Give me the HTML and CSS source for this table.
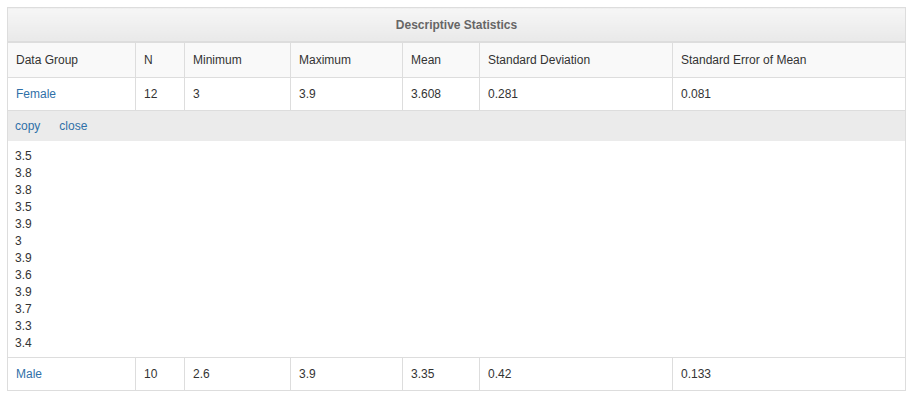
FILE: index.html
```html
<!DOCTYPE html>
<html>
<head>
<meta charset="utf-8">
<link rel="stylesheet" href="styles.css">
</head>
<body>
<table class="stats">
  <colgroup>
    <col class="c1"><col class="c2"><col class="c3"><col class="c4"><col class="c5"><col class="c6"><col class="c7">
  </colgroup>
  <thead>
    <tr class="title-row"><th colspan="7">Descriptive Statistics</th></tr>
  </thead>
  <tbody>
    <tr class="head-row">
      <td>Data Group</td><td>N</td><td>Minimum</td><td>Maximum</td><td>Mean</td><td>Standard Deviation</td><td>Standard Error of Mean</td>
    </tr>
    <tr class="data-row">
      <td><a class="link">Female</a></td><td>12</td><td>3</td><td>3.9</td><td>3.608</td><td>0.281</td><td>0.081</td>
    </tr>
    <tr class="detail-row">
      <td colspan="7">
        <div class="bar"><a class="link">copy</a><a class="link">close</a></div>
        <div class="values">
          <div>3.5</div><div>3.8</div><div>3.8</div><div>3.5</div><div>3.9</div><div>3</div>
          <div>3.9</div><div>3.6</div><div>3.9</div><div>3.7</div><div>3.3</div><div>3.4</div>
        </div>
      </td>
    </tr>
    <tr class="data-row">
      <td><a class="link">Male</a></td><td>10</td><td>2.6</td><td>3.9</td><td>3.35</td><td>0.42</td><td>0.133</td>
    </tr>
  </tbody>
</table>
</body>
</html>
```
FILE: styles.css
```css
body {
  margin: 7px;
  font-family: "Liberation Sans", Arial, sans-serif;
  font-size: 12px;
  color: #333;
  background: #fff;
}
.stats {
  border-collapse: collapse;
  table-layout: fixed;
  width: 898px;
  border: 1px solid #ddd;
}
.c1 { width: 128px; }
.c2 { width: 49px; }
.c3 { width: 106px; }
.c4 { width: 112px; }
.c5 { width: 77px; }
.c6 { width: 193px; }
.c7 { width: 233px; }
.title-row th {
  height: 33px;
  padding: 0;
  font-weight: bold;
  color: #666;
  text-align: center;
  background: linear-gradient(#f6f6f6, #e9e9e9);
  border-bottom: 2px solid #ddd;
}
.head-row td, .data-row td {
  border: 1px solid #ddd;
  padding: 0 8px;
  text-align: left;
  vertical-align: middle;
}
.head-row td {
  height: 34px;
  background: #f9f9f9;
}
.data-row td {
  height: 32px;
}
.link {
  color: #2f70a8;
  text-decoration: none;
}
.detail-row td {
  padding: 0;
  border: 1px solid #ddd;
}
.bar {
  height: 30px;
  background: #ebebeb;
  display: flex;
  align-items: center;
  gap: 19px;
  padding-left: 7px;
}
.values {
  padding: 7px 7px 5px;
  line-height: 17px;
}
```
